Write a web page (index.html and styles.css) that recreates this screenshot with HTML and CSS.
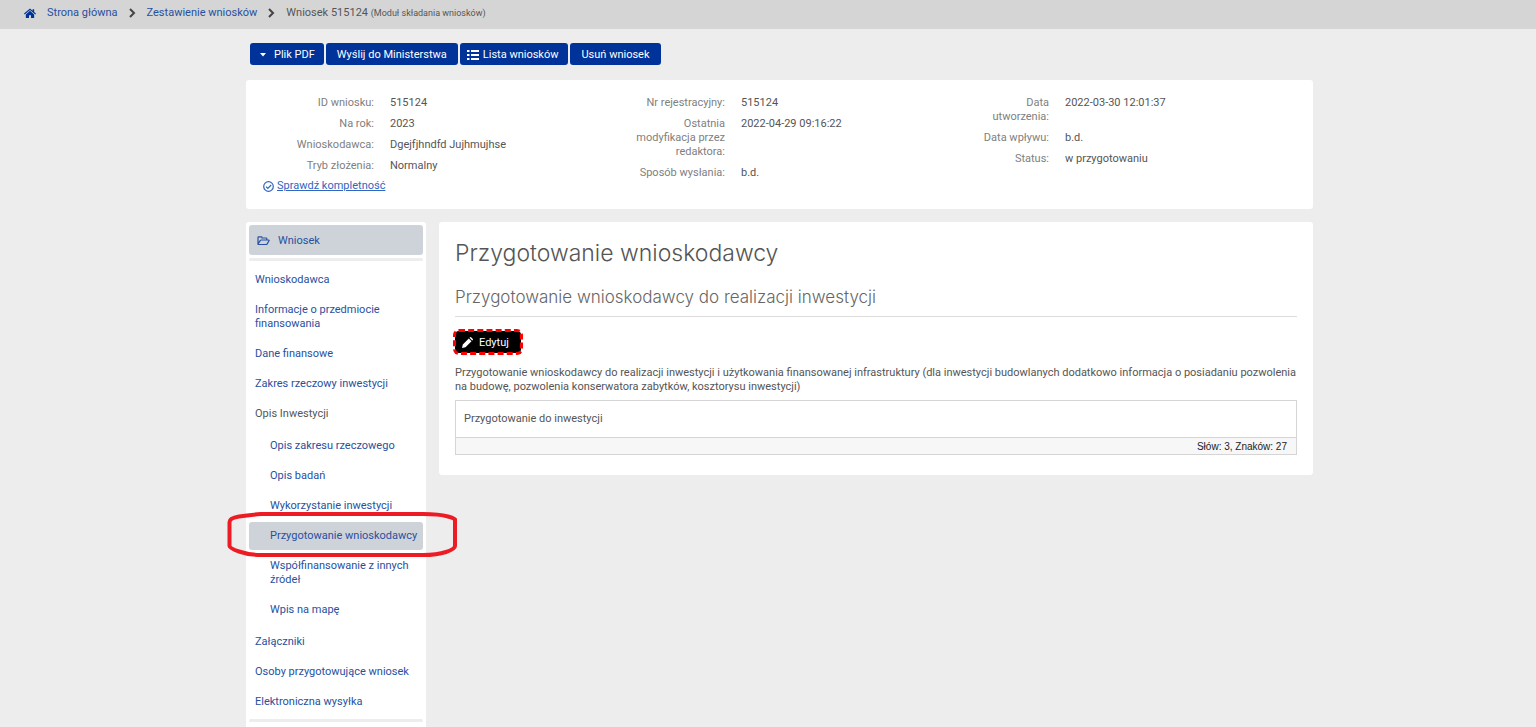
FILE: index.html
```html
<!DOCTYPE html>
<html lang="pl">
<head>
<meta charset="utf-8">
<meta name="viewport" content="width=device-width, initial-scale=1">
<title>Wniosek 515124</title>
<link rel="stylesheet" href="styles.css">
</head>
<body>
<nav class="breadcrumb" aria-label="Ścieżka">
  <a href="#" aria-label="Strona główna – ikona"><svg class="icon-home" viewBox="0 0 13 11"><path d="M6.5 0 0 5.6l.8.9L6.5 1.6l5.7 4.9.8-.9-2-1.700V.8H9.300v1.600z"/><path d="M6.500 2.600 2 6.500V10.500h3.400V7.300h2.200v3.200H11v-4z"/></svg></a>
  <a href="#">Strona główna</a>
  <svg class="chevron" viewBox="0 0 7 10"><path d="M1 1l4 4-4 4"/></svg>
  <a href="#">Zestawienie wniosków</a>
  <svg class="chevron" viewBox="0 0 7 10"><path d="M1 1l4 4-4 4"/></svg>
  <span>Wniosek 515124 <small>(Moduł składania wniosków)</small></span>
</nav>
<div class="page">
  <div class="toolbar">
    <button class="btn btn-pdf" type="button"><svg class="caret" viewBox="0 0 6 4"><path d="M0 0h6L3 3.500z"/></svg>Plik PDF</button>
    <button class="btn" type="button">Wyślij do Ministerstwa</button>
    <button class="btn btn-list" type="button"><svg class="icon-list" viewBox="0 0 12 10"><path d="M0 0h2.500v2H0zM4 0h8v2H4zM0 4h2.500v2H0zM4 4h8v2H4zM0 8h2.500v2H0zM4 8h8v2H4z"/></svg>Lista wniosków</button>
    <button class="btn" type="button">Usuń wniosek</button>
  </div>
  <section class="panel summary">
    <div>
      <dl class="facts">
        <dt>ID wniosku:</dt><dd>515124</dd>
        <dt>Na rok:</dt><dd>2023</dd>
        <dt>Wnioskodawca:</dt><dd>Dgejfjhndfd Jujhmujhse</dd>
        <dt>Tryb złożenia:</dt><dd>Normalny</dd>
      </dl>
      <a class="check-link" href="#"><svg class="icon-check" viewBox="0 0 11 11"><circle cx="5.500" cy="5.500" r="4.800"/><path d="M3 5.600l1.800 1.800L8.200 4"/></svg><span>Sprawdź kompletność</span></a>
    </div>
    <dl class="facts facts-middle">
      <dt>Nr rejestracyjny:</dt><dd>515124</dd>
      <dt>Ostatnia modyfikacja przez redaktora:</dt><dd>2022-04-29 09:16:22</dd>
      <dt>Sposób wysłania:</dt><dd>b.d.</dd>
    </dl>
    <dl class="facts facts-narrow">
      <dt>Data utworzenia:</dt><dd>2022-03-30 12:01:37</dd>
      <dt>Data wpływu:</dt><dd>b.d.</dd>
      <dt>Status:</dt><dd>w przygotowaniu</dd>
    </dl>
  </section>
  <div class="columns">
    <nav class="panel sidebar" aria-label="Wniosek">
      <a class="sidebar-title" href="#"><svg class="icon-folder" viewBox="0 0 13 10"><path d="M1 8V1.600Q1 .8 1.800.8h2.400q.8 0 .8.800V2h4q.8 0 .8.800V4M1 8l2.200-3.400q.4-.6 1.100-.6h7.300q.9 0 .4.700L10.200 7.900q-.4.600-1.100.600H1.500Q.9 8.500 1 8z"/></svg>Wniosek</a>
      <hr class="divider">
      <ul class="menu">
        <li><a class="menu-item" href="#">Wnioskodawca</a></li>
        <li><a class="menu-item" href="#">Informacje o przedmiocie finansowania</a></li>
        <li><a class="menu-item" href="#">Dane finansowe</a></li>
        <li><a class="menu-item" href="#">Zakres rzeczowy inwestycji</a></li>
        <li><span class="menu-item">Opis Inwestycji</span>
          <ul class="menu submenu">
            <li><a class="menu-item" href="#">Opis zakresu rzeczowego</a></li>
            <li><a class="menu-item" href="#">Opis badań</a></li>
            <li><a class="menu-item" href="#">Wykorzystanie inwestycji</a></li>
            <li class="marked"><a class="menu-item active" href="#" aria-current="page">Przygotowanie wnioskodawcy</a>
              <svg class="marker" viewBox="0 0 230 45"><path d="M2.500 10Q2.500 6 12 4.500T34 2H196Q212 2 221 4.500T228 9V34Q228 37 219 40T196 43H34Q22 43 12 39.500T2.500 34Z"/></svg></li>
            <li><a class="menu-item" href="#">Współfinansowanie z innych źródeł</a></li>
            <li><a class="menu-item" href="#">Wpis na mapę</a></li>
          </ul>
        </li>
        <li><a class="menu-item" href="#">Załączniki</a></li>
        <li><a class="menu-item" href="#">Osoby przygotowujące wniosek</a></li>
        <li><a class="menu-item" href="#">Elektroniczna wysyłka</a></li>
      </ul>
      <hr class="divider">
    </nav>
    <main class="panel content">
      <h1>Przygotowanie wnioskodawcy</h1>
      <h2>Przygotowanie wnioskodawcy do realizacji inwestycji</h2>
      <button class="btn-edit" type="button"><svg class="icon-pencil" viewBox="0 0 11 11"><path d="M0 11l.8-3.500L6.800 1.500l2.700 2.700-6 6zM7.500.8 8.100.2q.5-.4 1 0l1.700 1.700q.4.500 0 1l-.6.600z"/></svg>Edytuj</button>
      <p class="question">Przygotowanie wnioskodawcy do realizacji inwestycji i użytkowania finansowanej infrastruktury (dla inwestycji budowlanych dodatkowo informacja o posiadaniu pozwolenia na budowę, pozwolenia konserwatora zabytków, kosztorysu inwestycji)</p>
      <div class="answer">
        <div class="answer-text">Przygotowanie do inwestycji</div>
        <div class="answer-count">Słów: 3, Znaków: 27</div>
      </div>
    </main>
  </div>
</div>
</body>
</html>
```
FILE: styles.css
```css
* { box-sizing: border-box; }
html { overflow: hidden; }
body {
  margin: 0;
  background: #ededed;
  color: #555;
  font: 11px/14px Roboto, "Open Sans", sans-serif;
}
a { color: #2850a0; text-decoration: none; }
dl, dd, ul, h1, h2, p { margin: 0; padding: 0; font-weight: 400; }
button { font: inherit; }
svg { flex: none; fill: currentColor; }

.breadcrumb {
  display: flex;
  align-items: center;
  height: 29px;
  padding: 0 24px 3px;
  background: #d5d5d5;
}
.breadcrumb small { font-size: 9px; line-height: 1; }
.icon-home { display: block; width: 12px; height: 11px; margin-right: 11px; color: #003399; }
.chevron { width: 7px; height: 10px; margin: 0 11px; fill: none; stroke: #444; stroke-width: 2; }

.page { padding: 14px 223px 0 246px; }
.toolbar { display: flex; gap: 2px; padding-left: 4px; margin-bottom: 15px; }
.btn {
  display: flex;
  align-items: center;
  height: 22px;
  padding: 1px 11px 0;
  border: 0;
  border-radius: 3px;
  background: #003399;
  color: #fff;
}
.btn-pdf { gap: 8px; padding: 1px 9px 0 10px; }
.btn-list { gap: 4px; padding: 1px 10px 0 7px; }
.caret { width: 6px; height: 4px; }
.icon-list { width: 12px; height: 10px; }

.panel { background: #fff; border-radius: 3px; }
.summary {
  display: grid;
  grid-template-columns: 351fr 356fr 328fr;
  min-height: 129px;
  padding: 16px 16px 15px;
}
.facts {
  display: grid;
  grid-template-columns: 112px 1fr;
  gap: 7px 16px;
  align-content: start;
}
.facts-middle { grid-template-columns: 96px 1fr; padding-left: 16px; }
.facts-narrow { grid-template-columns: 80px 1fr; }
.facts dt { color: #808080; text-align: right; }
.check-link { display: flex; align-items: center; gap: 3px; margin: 6px 0 0 1px; color: #2f66bf; }
.check-link span { text-decoration: underline; }
.icon-check { width: 11px; height: 11px; fill: none; stroke: currentColor; stroke-width: 1.200; }

.columns {
  display: grid;
  grid-template-columns: 180px 1fr;
  gap: 13px;
  align-items: start;
  margin-top: 13px;
}
.sidebar { padding: 3px 3px 16px; }
.sidebar-title {
  display: flex;
  align-items: center;
  gap: 8px;
  height: 30px;
  padding: 1px 8px 0;
  border-radius: 3px;
  background: #ced3da;
}
.icon-folder { width: 13px; height: 10px; fill: none; stroke: currentColor; stroke-width: 1.200; }
.divider { height: 3px; margin: 3px 0 0; border: 0; border-radius: 2px; background: #ededed; }
.menu { display: flex; flex-direction: column; gap: 2px; margin: 5px 0 1px; list-style: none; }
.submenu { margin: 4px 0 2px; }
.menu-item { display: block; padding: 7px 6px; border-radius: 3px; }
.submenu .menu-item { padding: 7px 0 7px 21px; }
.active { background: #ced3da; }
.marked { position: relative; }
.marker {
  position: absolute;
  left: -22px;
  top: -10px;
  width: 230px;
  height: 45px;
  fill: none;
  stroke: #ed1c24;
  stroke-width: 4;
  pointer-events: none;
}

.content { padding: 16px 16px 20px; }
h1, h2 { font-family: Inter, Lato, sans-serif; font-weight: 300; }
h1 { font-size: 23px; line-height: 30px; }
h2 {
  margin: 17px 0 14px;
  padding-bottom: 7px;
  border-bottom: 1px solid #ddd;
  color: #666;
  font-size: 17px;
  line-height: 24px;
}
.btn-edit {
  display: flex;
  align-items: center;
  gap: 6px;
  height: 22px;
  margin: 0 0 13px;
  padding: 1px 12px 0 7px;
  border: 0;
  border-radius: 4px;
  outline: 3px dashed #f00;
  outline-offset: -1px;
  background: #000;
  color: #fff;
}
.icon-pencil { width: 11px; height: 11px; }
.answer { margin-top: 6px; border: 1px solid #d5d5d5; }
.answer-text { padding: 11px 8px; }
.answer-count {
  padding: 2px 9px 0;
  border-top: 1px solid #d5d5d5;
  background: #f7f7f7;
  color: #222;
  font-family: "Liberation Sans", sans-serif;
  font-size: 10px;
  text-align: right;
}
```
